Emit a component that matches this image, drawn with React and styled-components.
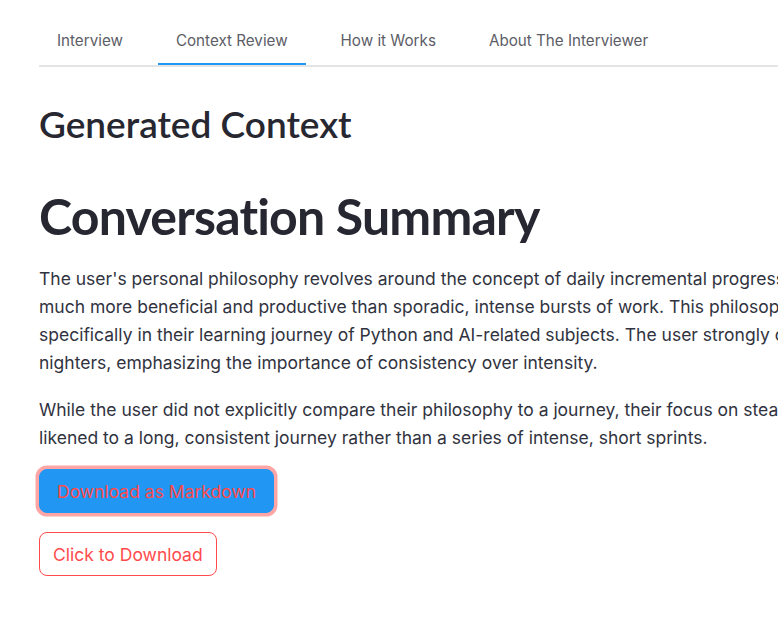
import React, { useState } from 'react'
import styled, { createGlobalStyle } from 'styled-components'

const GlobalStyle = createGlobalStyle`
  html, body {
    margin: 0;
    padding: 0;
    background: #ffffff;
    overflow: hidden;
  }
  body {
    font-family: Inter, "Liberation Sans", sans-serif;
    color: #31333f;
  }
`

const Page = styled.div`
  width: 880px;
  padding: 16px 0 40px 39px;
`

const TabList = styled.div`
  display: flex;
  gap: 17px;
  border-bottom: 2px solid #e4e4e4;
  width: 1000px;
`

const Tab = styled.button`
  height: 49px;
  padding: 0 18px;
  border: none;
  background: none;
  font-family: Inter, "Liberation Sans", sans-serif;
  font-size: 15.2px;
  color: #5c5d66;
  cursor: pointer;
  box-shadow: ${p => (p.$active ? 'inset 0 -2px 0 #2196f3' : 'none')};
`

const Title = styled.h2`
  margin: 35px 0 0;
  font-family: "Source Sans Pro", Lato, "Noto Sans", sans-serif;
  font-weight: 600;
  font-size: 37px;
  line-height: 1.2;
  color: #262730;
  font-variant-ligatures: none;
`

const Summary = styled.h1`
  margin: 40px 0 0;
  font-family: "Source Sans Pro", Lato, "Noto Sans", sans-serif;
  font-weight: 700;
  font-size: 50px;
  line-height: 1.2;
  letter-spacing: -0.8px;
  color: #262730;
  font-variant-ligatures: none;
`

const Text = styled.p`
  margin: 19px 0 0;
  font-size: 17.5px;
  line-height: 28px;
  color: #31333f;
`

const Actions = styled.div`
  display: flex;
  flex-direction: column;
  align-items: flex-start;
  gap: 19px;
  margin-top: 17px;
`

const Button = styled.button`
  height: 44px;
  padding: 0 ${p => (p.$primary ? 17 : 13)}px;
  border-radius: 8px;
  border: 1px solid ${p => (p.$primary ? '#2196f3' : '#ff4b4b')};
  background: ${p => (p.$primary ? '#2196f3' : '#ffffff')};
  color: #ff4b4b;
  font-family: Inter, "Liberation Sans", sans-serif;
  font-size: 17.5px;
  box-shadow: ${p => (p.$focused ? '0 0 0 3.5px rgba(255, 75, 75, 0.5)' : 'none')};
  cursor: pointer;
`

const tabs = ['Interview', 'Context Review', 'How it Works', 'About The Interviewer']

export default function App() {
  const [active, setActive] = useState('Context Review')

  return (
    <Page>
      <GlobalStyle />
      <TabList>
        {tabs.map(t => (
          <Tab key={t} $active={t === active} onClick={() => setActive(t)}>
            {t}
          </Tab>
        ))}
      </TabList>

      <Title>Generated Context</Title>
      <Summary>Conversation Summary</Summary>
      <Text>
        The user's personal philosophy revolves around the concept of daily incremental progress, seeing it as
        much more beneficial and productive than sporadic, intense bursts of work. This philosophy is applied
        specifically in their learning journey of Python and AI-related subjects. The user strongly opposes all-nighters,
        emphasizing the importance of consistency over intensity.
      </Text>
      <Text>
        While the user did not explicitly compare their philosophy to a journey, their focus on steady work can be
        likened to a long, consistent journey rather than a series of intense, short sprints.
      </Text>

      <Actions>
        <Button $primary $focused>Download as Markdown</Button>
        <Button>Click to Download</Button>
      </Actions>
    </Page>
  )
}
